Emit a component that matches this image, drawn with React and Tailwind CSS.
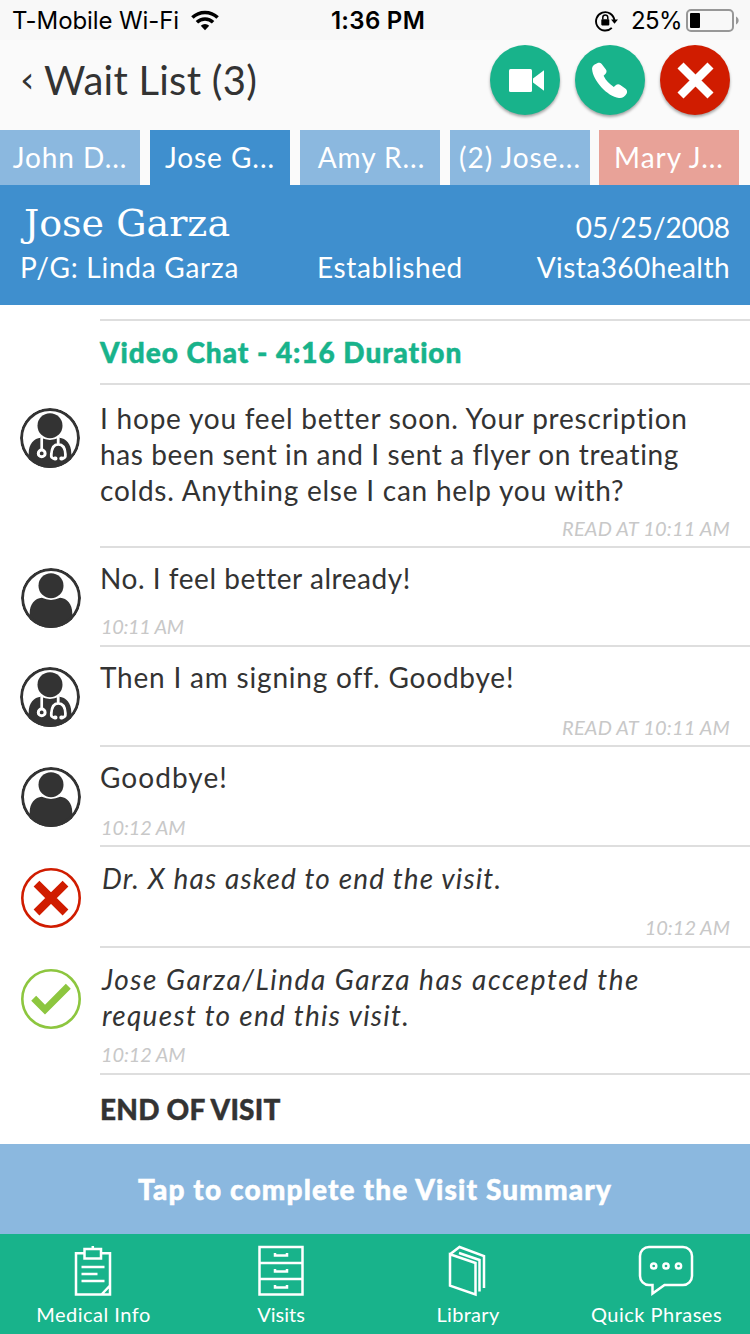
import React from "react";
import clsx from "clsx";

const WifiIcon = () => (
  <svg width="28" height="21" viewBox="0 0 28 21" className="ml-3">
    <g fill="none" stroke="#000" strokeWidth="3.5">
      <path d="M1.4 7.6a18 18 0 0 1 25.2 0" />
      <path d="M5.9 12.2a11.6 11.6 0 0 1 16.2 0" />
    </g>
    <path d="M14 20.2l-4.2-4.4a6 6 0 0 1 8.4 0z" />
  </svg>
);

const LockIcon = () => (
  <svg width="24" height="22" viewBox="0 0 24 22">
    <path
      d="M16.8 17.8A9.2 9.2 0 1 1 19.4 10.5"
      fill="none"
      stroke="#000"
      strokeWidth="1.9"
    />
    <path d="M16 9.6h7l-3.5 4.2z" />
    <rect x="6.3" y="9.2" width="8" height="6.2" rx="0.8" />
    <path
      d="M7.8 9.6V7.4a2.5 2.5 0 0 1 5 0v2.2"
      fill="none"
      stroke="#000"
      strokeWidth="1.5"
    />
  </svg>
);

const BatteryIcon = () => (
  <svg width="54" height="24" viewBox="0 0 54 24" className="ml-1">
    <rect
      x="1"
      y="1"
      width="46"
      height="21"
      rx="4"
      fill="none"
      stroke="#979797"
      strokeWidth="2"
    />
    <rect x="4" y="4" width="10" height="15" rx="1" />
    <path d="M50 7.500c3.500 1.600 3.500 6.400 0 8z" fill="#979797" />
  </svg>
);

const VideoIcon = () => (
  <svg width="70" height="70" viewBox="0 0 70 70" fill="#fff">
    <rect x="19" y="24" width="23" height="23" rx="1.5" />
    <path d="M43 33.500l11-8.300v20.600l-11-8.300z" />
  </svg>
);

const PhoneIcon = () => (
  <svg width="70" height="70" viewBox="0 0 70 70" fill="#fff">
    <path d="M22.2 18.2c1.500-.7 3.500-.4 4.500.9l4.200 5.400c1 1.400.8 3.100-.3 4.200l-2 2.100c2.400 4.900 5.600 8.300 10.200 11.100l2.200-1.800c1.300-1.100 3-1 4.300-.1l5.300 3.800c1.500 1.200 1.900 3 1.100 4.600-1.500 3-4.400 4.900-7.700 4.500C32 51.300 18 35.500 17.100 24.200c-.2-2.900 2.200-4.900 5.100-6z" />
  </svg>
);

const CloseIcon = () => (
  <svg width="70" height="70" viewBox="0 0 70 70">
    <path d="M20.5 20.5l30 30M50.500 20.500l-30 30" stroke="#fff" strokeWidth="8.5" />
  </svg>
);

const Person = ({ doctor }) => (
  <svg
    width="60"
    height="60"
    viewBox="0 0 60 60"
    className="overflow-hidden rounded-full"
  >
    <path
      d="M8.700 60V45.500C8.700 36 14 30.400 20.800 29.800q9.200 4.200 18.400 0C46 30.400 51.300 36 51.300 45.500V60z"
      fill="#333"
    />
    <circle cx="30" cy="30" r="28.5" fill="none" stroke="#333" strokeWidth="3" />
    <circle cx="30" cy="17.700" r="12.500" fill="#333" />
    {doctor && (
      <g fill="none" stroke="#fff">
        <path d="M21.700 29.500v12" strokeWidth="2.700" />
        <circle cx="21.700" cy="45.400" r="3.400" strokeWidth="3" />
        <path
          d="M38.200 29.500v7M35 50.600c-3.300 0-4-1.600-3.700-4.300.4-6.200 1.800-10 6.900-10s7 3.800 7.200 10c.2 2.700-.5 4.300-3.800 4.300"
          strokeWidth="2.800"
        />
        <path d="M34.800 50.500h.8M41.200 50.500h.8" strokeWidth="3.800" strokeLinecap="round" />
      </g>
    )}
  </svg>
);

const Ended = () => (
  <svg width="60" height="60" viewBox="0 0 60 60" fill="none" stroke="#d01c00">
    <circle cx="30" cy="30" r="28.700" strokeWidth="2.600" />
    <path d="M15.500 15.700l29 28.800M44.500 15.700l-29 28.800" strokeWidth="8.200" />
  </svg>
);

const Accepted = () => (
  <svg width="60" height="60" viewBox="0 0 60 60" fill="none" stroke="#8dc63f">
    <circle cx="30" cy="30" r="28.700" strokeWidth="2.600" />
    <path d="M12.700 29.300l11.300 11.300 23.300-23.300" strokeWidth="7" />
  </svg>
);

const MedicalIcon = () => (
  <svg width="38" height="52" viewBox="0 0 38 52" className="mr-0.5">
    <path d="M10 8.200H2v41.300h34V8.200h-8M28 49l8-8.500" />
    <path d="M10.500 4h16.500v9.500H10.500zM18.800 4V1" />
    <path d="M7.500 22h23M7.500 29h16M7.500 36h23" />
  </svg>
);

const VisitsIcon = () => (
  <svg width="46" height="52" viewBox="0 0 46 52">
    <path d="M1.500 2h43v47.500h-43zM1.500 18h43M1.500 34h43" />
    <path d="M17 8v2.500h12V8M17 24v2.500h12V24M17 40v2.500h12V40" />
  </svg>
);

const LibraryIcon = () => (
  <svg width="38" height="52" viewBox="0 0 38 52" className="mr-0.5">
    <path d="M2 9.200v31.500l25.500 8.800V18zL11.500 2 36 11v32" />
    <path d="M11 8l20.500 7v31.500" />
  </svg>
);

const PhrasesIcon = () => (
  <svg width="56" height="52" viewBox="0 0 56 52" className="ml-[18px]">
    <path d="M11 2h34a9 9 0 0 1 9 9v20a9 9 0 0 1-9 9H26.500L14.500 48.500V40H11a9 9 0 0 1-9-9V11a9 9 0 0 1 9-9z" />
    <circle cx="15.700" cy="21" r="2.600" />
    <circle cx="28" cy="21" r="2.600" />
    <circle cx="40.500" cy="21" r="2.600" />
  </svg>
);

const tabs = [
  { name: "John D...", color: "bg-[#8bb8df]" },
  { name: "Jose G...", color: "bg-[#3f8fce]" },
  { name: "Amy R...", color: "bg-[#8bb8df] pl-[3px]" },
  { name: "(2) Jose...", color: "bg-[#8bb8df]" },
  { name: "Mary J...", color: "bg-[#e8a298] -ml-px" },
];

const messages = [
  {
    icon: <Person doctor />,
    lines: [
      ["I hope you feel better soon. Your prescription", "tracking-[0.78px]"],
      ["has been sent in and I sent a flyer on treating", "tracking-[0.62px]"],
      ["colds. Anything else I can help you with?", "tracking-[0.77px]"],
    ],
    time: "READ AT 10:11 AM",
    right: true,
    row: "h-[163px] pt-[14px]",
    iconBox: "pl-5 pt-[9px]",
    foot: "pb-1.5 tracking-[0.18px]",
  },
  {
    icon: <Person />,
    lines: [["No. I feel better already!", "tracking-[0.54px]"]],
    time: "10:11 AM",
    row: "h-[99px] pt-[11px]",
    iconBox: "pl-[21px] pt-[9px]",
    foot: "pb-[7px] tracking-[-0.35px]",
  },
  {
    icon: <Person doctor />,
    lines: [["Then I am signing off. Goodbye!", "tracking-[0.8px]"]],
    time: "READ AT 10:11 AM",
    right: true,
    row: "h-[100px] pt-[11px]",
    iconBox: "pl-5 pt-[9px]",
    foot: "pb-1.5 tracking-[0.18px]",
  },
  {
    icon: <Person />,
    lines: [["Goodbye!", "tracking-[1.05px]"]],
    time: "10:12 AM",
    row: "h-[100px] pt-[11px]",
    iconBox: "pl-[21px] pt-[9px]",
    foot: "pb-1.5 tracking-[-0.12px]",
  },
  {
    icon: <Ended />,
    lines: [["Dr. X has asked to end the visit.", "tracking-[1.15px]"]],
    time: "10:12 AM",
    right: true,
    italic: true,
    row: "h-[101px] pt-[12px]",
    iconBox: "pl-[21px] pt-[9px]",
    foot: "pb-[7px]",
  },
  {
    icon: <Accepted />,
    lines: [
      ["Jose Garza/Linda Garza has accepted the", "tracking-[1.52px]"],
      ["request to end this visit.", "tracking-[1.28px]"],
    ],
    time: "10:12 AM",
    italic: true,
    row: "h-[127px] pt-[12px]",
    iconBox: "pl-[21px] pt-[9px]",
    foot: "pb-[7px] tracking-[-0.12px]",
  },
];

const Message = ({ icon, lines, time, right, italic, row, iconBox, foot }) => (
  <div className={clsx("flex", row)}>
    <div className={clsx("w-[100px] shrink-0", iconBox)}>{icon}</div>
    <div className="flex flex-1 flex-col justify-between border-b-2 border-[#dedede]">
      <div
        className={clsx(
          "pt-px text-[28px] leading-9 whitespace-nowrap",
          italic && "pl-[2px] italic"
        )}
      >
        {lines.map(([text, spacing]) => (
          <p key={text} className={spacing}>
            {text}
          </p>
        ))}
      </div>
      <p
        className={clsx(
          "pr-5 pl-px text-[20px] leading-6 italic text-[#c8c8c8]",
          right && "text-right",
          foot
        )}
      >
        {time}
      </p>
    </div>
  </div>
);

const navItems = [
  {
    label: "Medical Info",
    icon: <MedicalIcon />,
    box: "w-[187px] tracking-[0.5px]",
  },
  { label: "Visits", icon: <VisitsIcon />, box: "w-[188px]" },
  {
    label: "Library",
    icon: <LibraryIcon />,
    box: "w-[186px] tracking-[0.3px]",
  },
  {
    label: "Quick Phrases",
    icon: <PhrasesIcon />,
    box: "w-[189px] pl-0.5 tracking-[0.5px]",
  },
];

const App = () => {
  return (
    <div className="flex h-[1334px] w-[750px] flex-col overflow-hidden bg-white font-['Lato',sans-serif] text-[#333]">
      {/* status bar */}
      <div className="grid h-10 grid-cols-3 items-center bg-[#f8f8f8] pt-px font-['Inter',sans-serif] text-[24px] text-black">
        <div className="flex items-center pl-3 tracking-[-0.1px] whitespace-nowrap">
          T-Mobile Wi-Fi
          <WifiIcon />
        </div>
        <div className="pl-1.5 text-center font-semibold tracking-[0.3px]">
          1:36 PM
        </div>
        <div className="flex items-center justify-end pr-2.5">
          <LockIcon />
          <span className="ml-3 tracking-[-0.6px]">25%</span>
          <BatteryIcon />
        </div>
      </div>

      {/* header */}
      <div className="flex h-[90px] items-start justify-between bg-[#fafafa] pr-5 pl-5">
        <div className="flex items-center pt-3 text-[40px] leading-[56px]">
          <span className="w-6 font-['DejaVu_Sans',sans-serif] text-[36px]">
            ‹
          </span>
          <h1 className="tracking-[0.25px]">Wait List (3)</h1>
        </div>
        <div className="flex gap-[15px] pt-[5px]">
          <button className="size-[70px] rounded-full bg-[#18b38b] shadow-[0_2px_3px_rgba(0,0,0,0.35)]">
            <VideoIcon />
          </button>
          <button className="size-[70px] rounded-full bg-[#18b38b] shadow-[0_2px_3px_rgba(0,0,0,0.35)]">
            <PhoneIcon />
          </button>
          <button className="size-[70px] rounded-full bg-[#d01c00] shadow-[0_2px_3px_rgba(0,0,0,0.35)]">
            <CloseIcon />
          </button>
        </div>
      </div>

      {/* patient tabs */}
      <div className="flex h-[55px] gap-2.5 bg-[#fafafa]">
        {tabs.map((tab) => (
          <div
            key={tab.name}
            className={clsx(
              "w-[140px] shrink-0 text-center text-[28px] leading-[54px] tracking-[0.95px] text-white",
              tab.color
            )}
          >
            {tab.name}
          </div>
        ))}
      </div>

      {/* patient info */}
      <div className="h-[120px] bg-[#3f8fce] px-5 pt-3 text-[28px] tracking-[0.5px] text-white">
        <div className="flex h-[52px] items-start justify-between">
          <h2 className="pl-1 font-['DejaVu_Serif',serif] text-[38px] leading-[52px] tracking-normal">
            Jose Garza
          </h2>
          <span className="pt-3 leading-9 tracking-[-0.1px]">05/25/2008</span>
        </div>
        <div className="flex leading-9">
          <span className="w-[297px] tracking-[0.75px]">P/G: Linda Garza</span>
          <span className="tracking-[0.6px]">Established</span>
          <span className="ml-auto tracking-[0.45px]">Vista360health</span>
        </div>
      </div>

      {/* conversation */}
      <div className="h-[839px] pt-[14px]">
        <div className="ml-[100px] h-[66px] border-y-2 border-[#dedede] text-[28px] leading-[62px] font-black tracking-[0.95px] text-[#18b38b] [-webkit-text-stroke:0.5px]">
          Video Chat - 4:16 Duration
        </div>
        {messages.map((message, i) => (
          <Message key={i} {...message} />
        ))}
        <div className="ml-[100px] text-[28px] leading-[68px] font-black tracking-[0.2px] [-webkit-text-stroke:0.4px]">
          END OF VISIT
        </div>
      </div>

      <button className="h-[90px] shrink-0 bg-[#8bb8df] text-[28px] leading-[90px] font-black tracking-[1.15px] text-white [-webkit-text-stroke:0.5px]">
        Tap to complete the Visit Summary
      </button>

      {/* bottom nav */}
      <div className="flex h-[100px] shrink-0 bg-[#18b38b] text-white">
        {navItems.map((item) => (
          <div
            key={item.label}
            className={clsx(
              "flex flex-col items-center fill-none stroke-white stroke-[2.5] pt-[11px] text-[20px] leading-[34px] whitespace-nowrap",
              item.box
            )}
          >
            {item.icon}
            <span>{item.label}</span>
          </div>
        ))}
      </div>
    </div>
  );
};

export default App;
